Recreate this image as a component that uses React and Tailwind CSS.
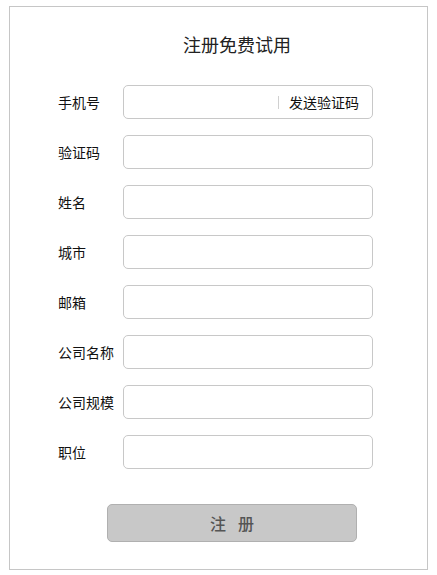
import React from "react";

const font = { fontFamily: '"Noto Sans CJK SC", "Noto Sans", sans-serif' };

const fields = ["验证码", "姓名", "城市", "邮箱", "公司名称", "公司规模", "职位"];

export default function App() {
  return (
    <div className="w-[437px] h-[575px] bg-white pl-[9px] pt-[6px]" style={font}>
      <div className="w-[419px] h-[564px] border border-[#c6c6c6] bg-white">
        <div className="mt-[28px] pl-[173px] text-[18px] leading-[18px] text-[#222]">注册免费试用</div>
        <div className="mt-[32px] pl-[48px] flex flex-col gap-[16px]">
          <div className="flex items-center h-[34px]">
            <div className="w-[65px] text-[14px] text-[#111]">手机号</div>
            <div className="w-[250px] h-[34px] border border-[#c8c8c8] rounded-[5px] flex items-center justify-end">
              <div className="w-px h-[13px] bg-[#d0d0d0] mr-[10px]" />
              <div className="text-[14px] text-[#111] mr-[13px] leading-none">发送验证码</div>
            </div>
          </div>
          {fields.map((f) => (
            <div key={f} className="flex items-center h-[34px]">
              <div className="w-[65px] text-[14px] text-[#111]">{f}</div>
              <div className="w-[250px] h-[34px] border border-[#c8c8c8] rounded-[5px]" />
            </div>
          ))}
        </div>
        <div className="mt-[35px] ml-[97px] w-[250px] h-[38px] rounded-[5px] bg-[#c8c8c8] border border-[#b0b0b0] flex items-center justify-center gap-[12px] text-[16px] text-[#555] font-medium">
          <span>注</span>
          <span>册</span>
        </div>
      </div>
    </div>
  );
}
